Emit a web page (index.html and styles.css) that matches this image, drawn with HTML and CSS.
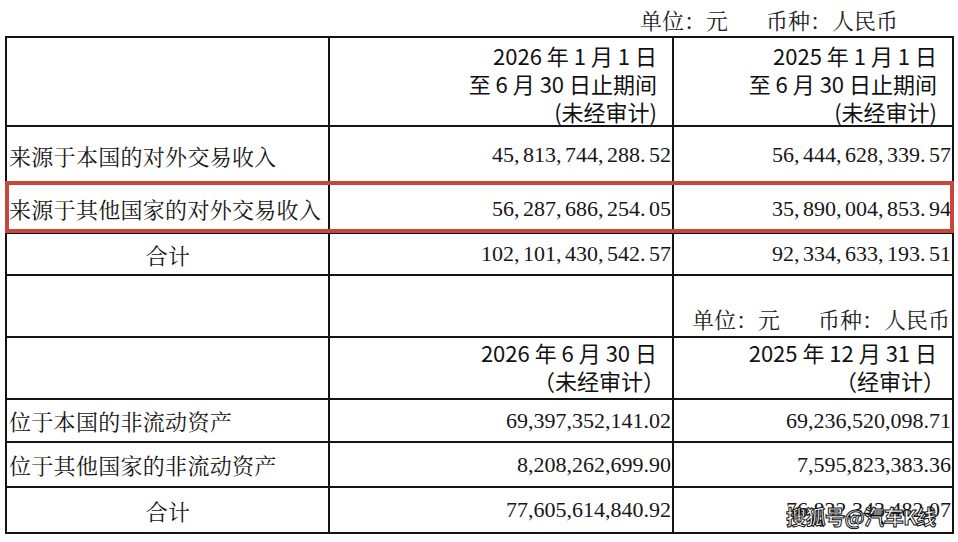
FILE: index.html
```html
<!DOCTYPE html>
<html lang="zh-CN">
<head>
<meta charset="utf-8">
<title>对外交易收入及非流动资产</title>
<link rel="stylesheet" href="styles.css">
</head>
<body>
<div class="sheet">
  <div class="unit-top"><span>单位：元</span><span class="gap">币种：人民币</span></div>
  <table class="fin">
    <colgroup>
      <col class="c1">
      <col class="c2">
      <col class="c3">
    </colgroup>
    <tr class="r-head1">
      <td></td>
      <td class="hd">2026 年 1 月 1 日<br>至 6 月 30 日止期间<br>(未经审计)</td>
      <td class="hd">2025 年 1 月 1 日<br>至 6 月 30 日止期间<br>(未经审计)</td>
    </tr>
    <tr class="r-a">
      <td class="lbl">来源于本国的对外交易收入</td>
      <td class="num ss">45, 813, 744, 288. 52</td>
      <td class="num ss">56, 444, 628, 339. 57</td>
    </tr>
    <tr class="r-b">
      <td class="lbl">来源于其他国家的对外交易收入</td>
      <td class="num ss">56, 287, 686, 254. 05</td>
      <td class="num ss">35, 890, 004, 853. 94</td>
    </tr>
    <tr class="r-c">
      <td class="lbl center">合计</td>
      <td class="num ss">102, 101, 430, 542. 57</td>
      <td class="num ss">92, 334, 633, 193. 51</td>
    </tr>
    <tr class="r-unit">
      <td></td>
      <td></td>
      <td class="unit-cell"><span>单位：元</span><span class="gap">币种：人民币</span></td>
    </tr>
    <tr class="r-head2">
      <td></td>
      <td class="hd hd2">2026 年 6 月 30 日<br><span class="paren1">（未经审计）</span></td>
      <td class="hd hd2">2025 年 12 月 31 日<br><span class="paren2">（经审计）</span></td>
    </tr>
    <tr class="r-d">
      <td class="lbl">位于本国的非流动资产</td>
      <td class="num">69,397,352,141.02</td>
      <td class="num">69,236,520,098.71</td>
    </tr>
    <tr class="r-e">
      <td class="lbl">位于其他国家的非流动资产</td>
      <td class="num">8,208,262,699.90</td>
      <td class="num">7,595,823,383.36</td>
    </tr>
    <tr class="r-f">
      <td class="lbl center">合计</td>
      <td class="num">77,605,614,840.92</td>
      <td class="num">76,832,343,482.07</td>
    </tr>
  </table>
  <div class="highlight"></div>
  <div class="watermark">搜狐号@汽车K线</div>
</div>
</body>
</html>
```
FILE: styles.css
```css
html, body {
  margin: 0;
  padding: 0;
  background: #ffffff;
}

body {
  width: 958px;
  height: 542px;
  overflow: hidden;
  color: #161616;
  font-family: "Noto Serif CJK SC", "Noto Sans CJK SC", serif;
  font-size: 22px;
}

.sheet {
  position: relative;
  padding-left: 5px;
}

.unit-top {
  height: 36px;
  box-sizing: border-box;
  padding-top: 5px;
  padding-right: 60px;
  line-height: 30px;
  display: flex;
  justify-content: flex-end;
  font-size: 22px;
  color: #222;
}

.gap {
  margin-left: 38px;
}

.fin {
  border-collapse: collapse;
  table-layout: fixed;
  width: 947px;
}

.c1 { width: 323px; }
.c2 { width: 344px; }
.c3 { width: 280px; }

.fin td {
  border: 2px solid #141414;
  padding: 0 1px 0 2px;
  vertical-align: middle;
  white-space: nowrap;
}

.r-head1 { height: 88px; }
.r-a { height: 58px; }
.r-b { height: 49px; }
.r-c { height: 42px; }
.r-unit { height: 62px; }
.r-head2 { height: 62px; }
.r-d { height: 43px; }
.r-e { height: 45px; }
.r-f { height: 46px; }

.fin .hd {
  font-family: "Noto Sans CJK SC", sans-serif;
  font-weight: 400;
  text-align: right;
  line-height: 28px;
  padding-right: 15px;
  vertical-align: top;
  padding-top: 3px;
  color: #111;
}

.fin .hd2 {
  padding-top: 0;
}

.paren1 { margin-right: -8px; }
.paren2 { margin-right: -8px; }

.lbl {
  text-align: left;
  letter-spacing: 0.3px;
}

.center {
  text-align: center;
}

.num {
  text-align: right;
  font-family: "Liberation Serif", serif;
  font-size: 22px;
}

.num.ss {
  word-spacing: -2px;
  font-size: 22px;
}

.fin .unit-cell {
  text-align: right;
  vertical-align: bottom;
  padding-bottom: 2px;
  padding-right: 2px;
  font-size: 22px;
  color: #222;
}

.unit-cell span {
  display: inline-block;
}

.highlight {
  position: absolute;
  left: 5px;
  top: 181px;
  width: 941px;
  height: 44px;
  border: 4px solid #c8463a;
  pointer-events: none;
}

.watermark {
  position: absolute;
  left: 786px;
  top: 503px;
  font-family: "Noto Sans CJK SC", sans-serif;
  font-weight: 700;
  font-size: 20px;
  line-height: 28px;
  color: #ffffff;
  -webkit-text-stroke: 1px #111;
  letter-spacing: -0.5px;
}
```
